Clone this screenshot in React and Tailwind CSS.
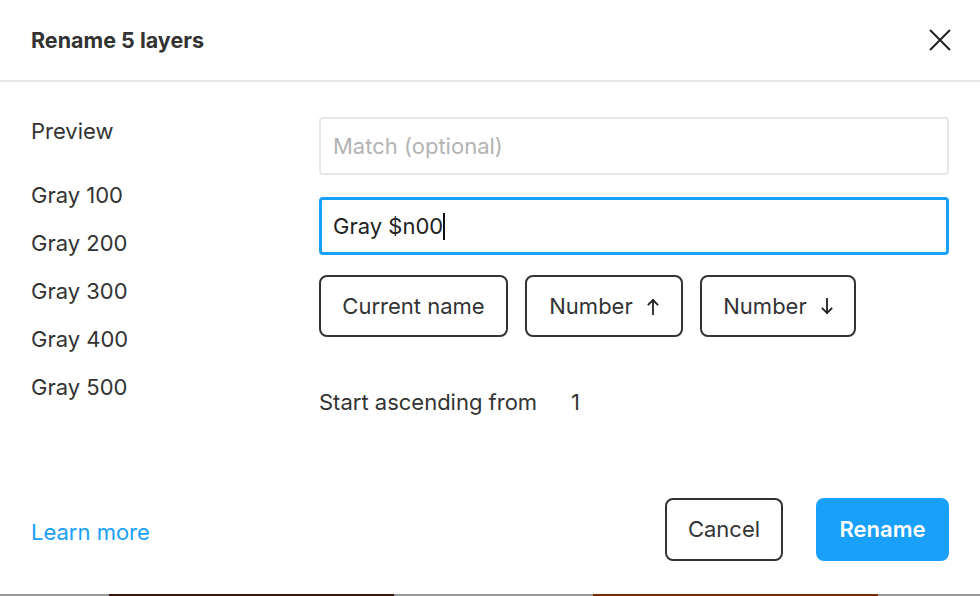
import React from 'react';

function Arrow({ down = false }) {
  return (
    <svg width="12" height="17" viewBox="0 0 12 17" fill="none" stroke="#222" strokeWidth="1.8" strokeLinecap="square" className={down ? 'rotate-180' : ''}>
      <path d="M6 2V16" />
      <path d="M1.5 6.5L6 2L10.5 6.5" />
    </svg>
  );
}

export default function App() {
  const preview = ['Gray 100', 'Gray 200', 'Gray 300', 'Gray 400', 'Gray 500'];

  return (
    <div className="w-[980px] h-[596px] flex flex-col bg-white text-[#333] font-['Inter',sans-serif]">
      {/* Modal */}
      <div className="h-[594px] flex flex-col bg-white">
        {/* Header */}
        <div className="h-[82px] shrink-0 flex items-center justify-between pl-[31px] pr-[28px] border-b-2 border-[#e6e6e6]">
          <h2 className="text-[21.5px] font-bold text-[#333] mt-[1px]">Rename 5 layers</h2>
          <button className="w-[24px] h-[24px] flex items-center justify-center">
            <svg width="22" height="22" viewBox="0 0 22 22" stroke="#222" strokeWidth="2">
              <path d="M1 1L21 21M21 1L1 21" />
            </svg>
          </button>
        </div>

        {/* Body */}
        <div className="flex-1 flex px-[31px] pt-[35px] text-[22px]">
          <div className="w-[288px] shrink-0">
            <div className="h-[26px] mt-[1px] flex items-center">Preview</div>
            <div className="mt-[27px] flex flex-col">
              {preview.map(p => (
                <div key={p} className="h-[48px] flex items-center">{p}</div>
              ))}
            </div>
          </div>

          <div className="flex-1 flex flex-col">
            <div className="h-[58px] border-2 border-[#e6e6e6] rounded-[4px] flex items-center px-[12px] text-[#b3b3b3]">
              Match (optional)
            </div>
            <div className="h-[58px] mt-[22px] border-[3px] border-[#18a0fb] rounded-[4px] flex items-center px-[11px] text-[#222]">
              <span>Gray $n00</span>
              <span className="w-[1.5px] h-[27px] bg-[#111]" />
            </div>
            <div className="mt-[20px] flex gap-[17px]">
              <button className="h-[62px] w-[189px] border-2 border-[#333] rounded-[8px]">Current name</button>
              <button className="h-[62px] w-[158px] border-2 border-[#333] rounded-[8px] flex items-center justify-center gap-[14px]">
                Number <Arrow />
              </button>
              <button className="h-[62px] w-[156px] border-2 border-[#333] rounded-[8px] flex items-center justify-center gap-[14px]">
                Number <Arrow down />
              </button>
            </div>
            <div className="mt-[52px] h-[26px] flex items-center">
              <span className="w-[252px]">Start ascending from</span>
              <span>1</span>
            </div>
          </div>
        </div>

        {/* Footer */}
        <div className="flex items-center justify-between pl-[31px] pr-[31px] pb-[33px] text-[22px]">
          <a className="text-[#18a0fb] mt-[5px]">Learn more</a>
          <div className="flex gap-[33px]">
            <button className="h-[63px] w-[118px] border-2 border-[#333] rounded-[8px]">Cancel</button>
            <button className="h-[63px] w-[133px] bg-[#18a0fb] rounded-[8px] font-semibold text-white">Rename</button>
          </div>
        </div>
      </div>

      {/* Canvas peeking below */}
      <div className="h-[2px] flex">
        <div className="w-[109px] bg-[#999]" />
        <div className="w-[285px] bg-[#3d1408]" />
        <div className="w-[199px] bg-[#999]" />
        <div className="w-[285px] bg-[#7a2a08]" />
        <div className="flex-1 bg-[#999]" />
      </div>
    </div>
  );
}
